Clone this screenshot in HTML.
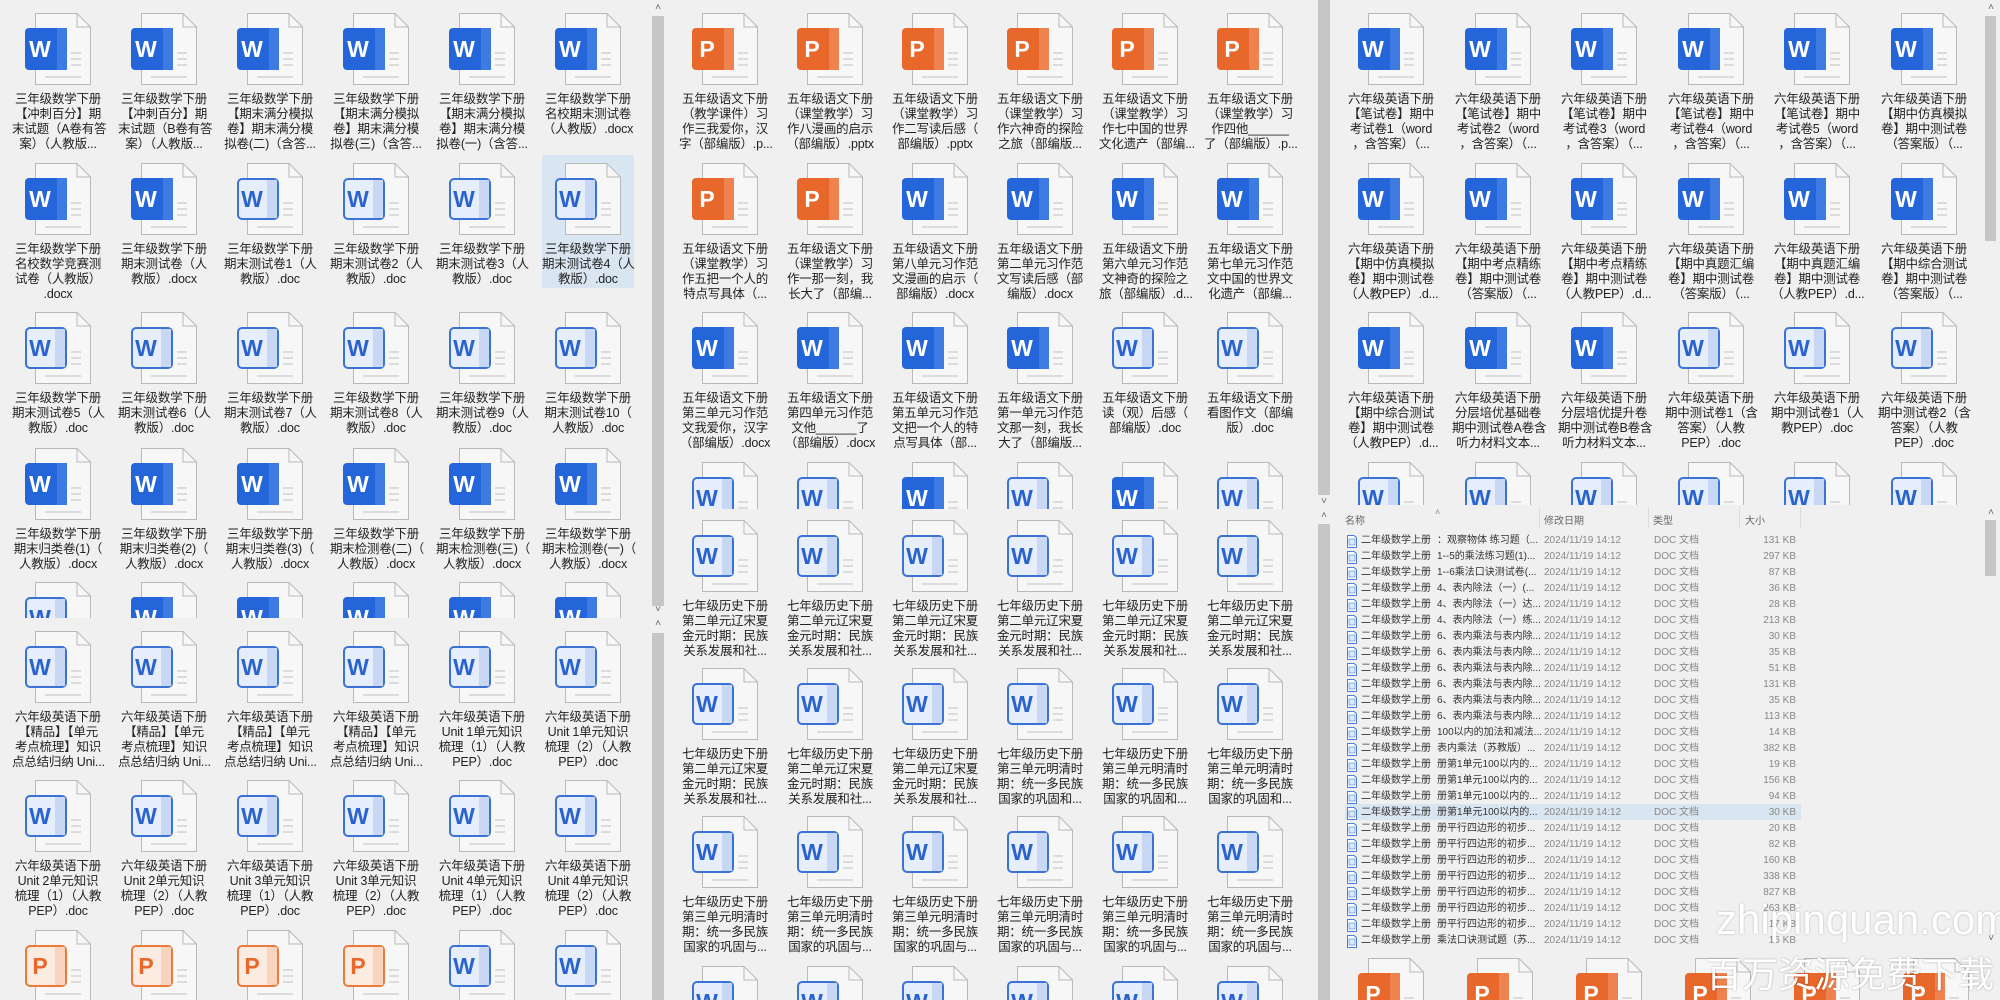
<!DOCTYPE html>
<html><head><meta charset="utf-8">
<style>
*{margin:0;padding:0;box-sizing:border-box}
body{width:2000px;height:1000px;background:#f0f0f0;position:relative;overflow:hidden;font-family:"Liberation Sans","Noto Sans CJK SC",sans-serif;color:#222}
.p{position:absolute;overflow:hidden;background:#f0f0f0}
.c{position:absolute;width:92px}
.c svg{display:block;margin:0 auto;width:66px;height:72px}
.t{margin-top:7px;font-size:12.5px;line-height:15px;text-align:center;white-space:nowrap;letter-spacing:-0.2px}
.sb{position:absolute;background:#c6c6c6}
.ar{position:absolute;font-size:10px;color:#666;width:14px;text-align:center}
.sel{position:absolute;background:#d9e5f1}
.lr{position:absolute;left:0;height:16px;width:470px;font-size:10px;line-height:16px;white-space:nowrap}
.lr span{position:absolute;top:0}
.lr .a{left:28px;color:#333}.lr .b{left:104px;color:#333}.lr .d{left:211px;color:#888}.lr .e{left:321px;color:#888}.lr .f{left:400px;width:63px;text-align:right;color:#888}
.lr svg{position:absolute;left:14px;top:2px;width:10px;height:13px}
</style></head><body>
<svg width="0" height="0" style="position:absolute">
<defs>
<g id="pg"><path d="M10.5 .5H52L65.5 14V71.5H10.5Z" fill="#f7f7f7" stroke="#b9b9b9"/><path d="M52 .5V14H65.5" fill="none" stroke="#b9b9b9"/><path d="M46 40h10M46 46h10M46 52h10M20 64h36" stroke="#dcdcdc" stroke-width="2"/></g>
<symbol id="wd" viewBox="0 0 66 72"><use href="#pg"/><rect x="0" y="15" width="42" height="42" rx="4" fill="#2466d9"/><rect x="32" y="15" width="10" height="42" fill="#3d7be3"/><text x="15" y="44" font-family="Liberation Sans" font-weight="bold" font-size="23" fill="#fff" text-anchor="middle">W</text></symbol>
<symbol id="wo" viewBox="0 0 66 72"><use href="#pg"/><rect x="1" y="16" width="40" height="40" rx="4" fill="#e7eefb" stroke="#3a72d6" stroke-width="2"/><rect x="30" y="17" width="10" height="38" fill="#c8d8f4"/><text x="15" y="44" font-family="Liberation Sans" font-weight="bold" font-size="23" fill="#2a63cd" text-anchor="middle">W</text></symbol>
<symbol id="pd" viewBox="0 0 66 72"><use href="#pg"/><rect x="0" y="15" width="42" height="42" rx="4" fill="#e8672a"/><rect x="32" y="15" width="10" height="42" fill="#ef8350"/><text x="15" y="44" font-family="Liberation Sans" font-weight="bold" font-size="23" fill="#fff" text-anchor="middle">P</text></symbol>
<symbol id="po" viewBox="0 0 66 72"><use href="#pg"/><rect x="1" y="16" width="40" height="40" rx="4" fill="#fcebe0" stroke="#ec7a3c" stroke-width="2"/><rect x="30" y="17" width="10" height="38" fill="#f8d4bf"/><text x="15" y="44" font-family="Liberation Sans" font-weight="bold" font-size="23" fill="#e8672a" text-anchor="middle">P</text></symbol>
<symbol id="li" viewBox="0 0 10 13"><path d="M.5 .5H7L9.5 3V12.5H.5Z" fill="#fff" stroke="#4a7fd8"/><rect x="2" y="4" width="6" height="6" fill="#dbe6f8" stroke="#4a7fd8" stroke-width=".6"/></symbol>
</defs></svg>

<!-- LEFT A -->
<div class="p" style="left:0;top:0;width:652px;height:618px">
<div class="sel" style="left:542px;top:155px;width:92px;height:133px"></div>
<div class="c" style="left:12px;top:13px"><svg><use href="#wd"/></svg><div class="t">三年级数学下册<br>【冲刺百分】期<br>末试题（A卷有答<br>案）（人教版...</div></div>
<div class="c" style="left:118px;top:13px"><svg><use href="#wd"/></svg><div class="t">三年级数学下册<br>【冲刺百分】期<br>末试题（B卷有答<br>案）（人教版...</div></div>
<div class="c" style="left:224px;top:13px"><svg><use href="#wd"/></svg><div class="t">三年级数学下册<br>【期末满分模拟<br>卷】期末满分模<br>拟卷(二)（含答...</div></div>
<div class="c" style="left:330px;top:13px"><svg><use href="#wd"/></svg><div class="t">三年级数学下册<br>【期末满分模拟<br>卷】期末满分模<br>拟卷(三)（含答...</div></div>
<div class="c" style="left:436px;top:13px"><svg><use href="#wd"/></svg><div class="t">三年级数学下册<br>【期末满分模拟<br>卷】期末满分模<br>拟卷(一)（含答...</div></div>
<div class="c" style="left:542px;top:13px"><svg><use href="#wd"/></svg><div class="t">三年级数学下册<br>名校期末测试卷<br>（人教版）.docx</div></div>

<div class="c" style="left:12px;top:163px"><svg><use href="#wd"/></svg><div class="t">三年级数学下册<br>名校数学竞赛测<br>试卷（人教版）<br>.docx</div></div>
<div class="c" style="left:118px;top:163px"><svg><use href="#wd"/></svg><div class="t">三年级数学下册<br>期末测试卷（人<br>教版）.docx</div></div>
<div class="c" style="left:224px;top:163px"><svg><use href="#wo"/></svg><div class="t">三年级数学下册<br>期末测试卷1（人<br>教版）.doc</div></div>
<div class="c" style="left:330px;top:163px"><svg><use href="#wo"/></svg><div class="t">三年级数学下册<br>期末测试卷2（人<br>教版）.doc</div></div>
<div class="c" style="left:436px;top:163px"><svg><use href="#wo"/></svg><div class="t">三年级数学下册<br>期末测试卷3（人<br>教版）.doc</div></div>
<div class="c" style="left:542px;top:163px"><svg><use href="#wo"/></svg><div class="t">三年级数学下册<br>期末测试卷4（人<br>教版）.doc</div></div>

<div class="c" style="left:12px;top:312px"><svg><use href="#wo"/></svg><div class="t">三年级数学下册<br>期末测试卷5（人<br>教版）.doc</div></div>
<div class="c" style="left:118px;top:312px"><svg><use href="#wo"/></svg><div class="t">三年级数学下册<br>期末测试卷6（人<br>教版）.doc</div></div>
<div class="c" style="left:224px;top:312px"><svg><use href="#wo"/></svg><div class="t">三年级数学下册<br>期末测试卷7（人<br>教版）.doc</div></div>
<div class="c" style="left:330px;top:312px"><svg><use href="#wo"/></svg><div class="t">三年级数学下册<br>期末测试卷8（人<br>教版）.doc</div></div>
<div class="c" style="left:436px;top:312px"><svg><use href="#wo"/></svg><div class="t">三年级数学下册<br>期末测试卷9（人<br>教版）.doc</div></div>
<div class="c" style="left:542px;top:312px"><svg><use href="#wo"/></svg><div class="t">三年级数学下册<br>期末测试卷10（<br>人教版）.doc</div></div>

<div class="c" style="left:12px;top:448px"><svg><use href="#wd"/></svg><div class="t">三年级数学下册<br>期末归类卷(1)（<br>人教版）.docx</div></div>
<div class="c" style="left:118px;top:448px"><svg><use href="#wd"/></svg><div class="t">三年级数学下册<br>期末归类卷(2)（<br>人教版）.docx</div></div>
<div class="c" style="left:224px;top:448px"><svg><use href="#wd"/></svg><div class="t">三年级数学下册<br>期末归类卷(3)（<br>人教版）.docx</div></div>
<div class="c" style="left:330px;top:448px"><svg><use href="#wd"/></svg><div class="t">三年级数学下册<br>期末检测卷(二)（<br>人教版）.docx</div></div>
<div class="c" style="left:436px;top:448px"><svg><use href="#wd"/></svg><div class="t">三年级数学下册<br>期末检测卷(三)（<br>人教版）.docx</div></div>
<div class="c" style="left:542px;top:448px"><svg><use href="#wd"/></svg><div class="t">三年级数学下册<br>期末检测卷(一)（<br>人教版）.docx</div></div>

<div class="c" style="left:12px;top:582px"><svg><use href="#wo"/></svg></div>
<div class="c" style="left:118px;top:582px"><svg><use href="#wd"/></svg></div>
<div class="c" style="left:224px;top:582px"><svg><use href="#wd"/></svg></div>
<div class="c" style="left:330px;top:582px"><svg><use href="#wd"/></svg></div>
<div class="c" style="left:436px;top:582px"><svg><use href="#wd"/></svg></div>
<div class="c" style="left:542px;top:582px"><svg><use href="#wd"/></svg></div>
</div>

<!-- LEFT B -->
<div class="p" style="left:0;top:618px;width:652px;height:382px">
<div class="c" style="left:12px;top:13px"><svg><use href="#wo"/></svg><div class="t">六年级英语下册<br>【精品】【单元<br>考点梳理】知识<br>点总结归纳 Uni...</div></div>
<div class="c" style="left:118px;top:13px"><svg><use href="#wo"/></svg><div class="t">六年级英语下册<br>【精品】【单元<br>考点梳理】知识<br>点总结归纳 Uni...</div></div>
<div class="c" style="left:224px;top:13px"><svg><use href="#wo"/></svg><div class="t">六年级英语下册<br>【精品】【单元<br>考点梳理】知识<br>点总结归纳 Uni...</div></div>
<div class="c" style="left:330px;top:13px"><svg><use href="#wo"/></svg><div class="t">六年级英语下册<br>【精品】【单元<br>考点梳理】知识<br>点总结归纳 Uni...</div></div>
<div class="c" style="left:436px;top:13px"><svg><use href="#wo"/></svg><div class="t">六年级英语下册<br>Unit 1单元知识<br>梳理（1）（人教<br>PEP）.doc</div></div>
<div class="c" style="left:542px;top:13px"><svg><use href="#wo"/></svg><div class="t">六年级英语下册<br>Unit 1单元知识<br>梳理（2）（人教<br>PEP）.doc</div></div>

<div class="c" style="left:12px;top:162px"><svg><use href="#wo"/></svg><div class="t">六年级英语下册<br>Unit 2单元知识<br>梳理（1）（人教<br>PEP）.doc</div></div>
<div class="c" style="left:118px;top:162px"><svg><use href="#wo"/></svg><div class="t">六年级英语下册<br>Unit 2单元知识<br>梳理（2）（人教<br>PEP）.doc</div></div>
<div class="c" style="left:224px;top:162px"><svg><use href="#wo"/></svg><div class="t">六年级英语下册<br>Unit 3单元知识<br>梳理（1）（人教<br>PEP）.doc</div></div>
<div class="c" style="left:330px;top:162px"><svg><use href="#wo"/></svg><div class="t">六年级英语下册<br>Unit 3单元知识<br>梳理（2）（人教<br>PEP）.doc</div></div>
<div class="c" style="left:436px;top:162px"><svg><use href="#wo"/></svg><div class="t">六年级英语下册<br>Unit 4单元知识<br>梳理（1）（人教<br>PEP）.doc</div></div>
<div class="c" style="left:542px;top:162px"><svg><use href="#wo"/></svg><div class="t">六年级英语下册<br>Unit 4单元知识<br>梳理（2）（人教<br>PEP）.doc</div></div>

<div class="c" style="left:12px;top:312px"><svg><use href="#po"/></svg></div>
<div class="c" style="left:118px;top:312px"><svg><use href="#po"/></svg></div>
<div class="c" style="left:224px;top:312px"><svg><use href="#po"/></svg></div>
<div class="c" style="left:330px;top:312px"><svg><use href="#po"/></svg></div>
<div class="c" style="left:436px;top:312px"><svg><use href="#wo"/></svg></div>
<div class="c" style="left:542px;top:312px"><svg><use href="#wo"/></svg></div>
</div>

<!-- left scrollbars -->
<div class="sb" style="left:652px;top:16px;width:12px;height:590px"></div>
<div class="ar" style="left:651px;top:2px">˄</div>
<div class="ar" style="left:651px;top:604px">˅</div>
<div class="ar" style="left:651px;top:618px">˄</div>
<div class="sb" style="left:652px;top:633px;width:12px;height:367px"></div>

<!-- MIDDLE A -->
<div class="p" style="left:665px;top:0;width:653px;height:509px">
<div class="c" style="left:14px;top:13px"><svg><use href="#pd"/></svg><div class="t">五年级语文下册<br>（教学课件）习<br>作三我爱你，汉<br>字（部编版）.p...</div></div>
<div class="c" style="left:119px;top:13px"><svg><use href="#pd"/></svg><div class="t">五年级语文下册<br>（课堂教学）习<br>作八漫画的启示<br>（部编版）.pptx</div></div>
<div class="c" style="left:224px;top:13px"><svg><use href="#pd"/></svg><div class="t">五年级语文下册<br>（课堂教学）习<br>作二写读后感（<br>部编版）.pptx</div></div>
<div class="c" style="left:329px;top:13px"><svg><use href="#pd"/></svg><div class="t">五年级语文下册<br>（课堂教学）习<br>作六神奇的探险<br>之旅（部编版...</div></div>
<div class="c" style="left:434px;top:13px"><svg><use href="#pd"/></svg><div class="t">五年级语文下册<br>（课堂教学）习<br>作七中国的世界<br>文化遗产（部编...</div></div>
<div class="c" style="left:539px;top:13px"><svg><use href="#pd"/></svg><div class="t">五年级语文下册<br>（课堂教学）习<br>作四他______<br>了（部编版）.p...</div></div>

<div class="c" style="left:14px;top:163px"><svg><use href="#pd"/></svg><div class="t">五年级语文下册<br>（课堂教学）习<br>作五把一个人的<br>特点写具体（...</div></div>
<div class="c" style="left:119px;top:163px"><svg><use href="#pd"/></svg><div class="t">五年级语文下册<br>（课堂教学）习<br>作一那一刻，我<br>长大了（部编...</div></div>
<div class="c" style="left:224px;top:163px"><svg><use href="#wd"/></svg><div class="t">五年级语文下册<br>第八单元习作范<br>文漫画的启示（<br>部编版）.docx</div></div>
<div class="c" style="left:329px;top:163px"><svg><use href="#wd"/></svg><div class="t">五年级语文下册<br>第二单元习作范<br>文写读后感（部<br>编版）.docx</div></div>
<div class="c" style="left:434px;top:163px"><svg><use href="#wd"/></svg><div class="t">五年级语文下册<br>第六单元习作范<br>文神奇的探险之<br>旅（部编版）.d...</div></div>
<div class="c" style="left:539px;top:163px"><svg><use href="#wd"/></svg><div class="t">五年级语文下册<br>第七单元习作范<br>文中国的世界文<br>化遗产（部编...</div></div>

<div class="c" style="left:14px;top:312px"><svg><use href="#wd"/></svg><div class="t">五年级语文下册<br>第三单元习作范<br>文我爱你，汉字<br>（部编版）.docx</div></div>
<div class="c" style="left:119px;top:312px"><svg><use href="#wd"/></svg><div class="t">五年级语文下册<br>第四单元习作范<br>文他______了<br>（部编版）.docx</div></div>
<div class="c" style="left:224px;top:312px"><svg><use href="#wd"/></svg><div class="t">五年级语文下册<br>第五单元习作范<br>文把一个人的特<br>点写具体（部...</div></div>
<div class="c" style="left:329px;top:312px"><svg><use href="#wd"/></svg><div class="t">五年级语文下册<br>第一单元习作范<br>文那一刻，我长<br>大了（部编版...</div></div>
<div class="c" style="left:434px;top:312px"><svg><use href="#wo"/></svg><div class="t">五年级语文下册<br>读（观）后感（<br>部编版）.doc</div></div>
<div class="c" style="left:539px;top:312px"><svg><use href="#wo"/></svg><div class="t">五年级语文下册<br>看图作文（部编<br>版）.doc</div></div>

<div class="c" style="left:14px;top:462px"><svg><use href="#wo"/></svg></div>
<div class="c" style="left:119px;top:462px"><svg><use href="#wo"/></svg></div>
<div class="c" style="left:224px;top:462px"><svg><use href="#wd"/></svg></div>
<div class="c" style="left:329px;top:462px"><svg><use href="#wo"/></svg></div>
<div class="c" style="left:434px;top:462px"><svg><use href="#wd"/></svg></div>
<div class="c" style="left:539px;top:462px"><svg><use href="#wo"/></svg></div>
</div>

<!-- MIDDLE B -->
<div class="p" style="left:665px;top:509px;width:653px;height:491px">
<div class="c" style="left:14px;top:11px"><svg><use href="#wo"/></svg><div class="t">七年级历史下册<br>第二单元辽宋夏<br>金元时期：民族<br>关系发展和社...</div></div>
<div class="c" style="left:119px;top:11px"><svg><use href="#wo"/></svg><div class="t">七年级历史下册<br>第二单元辽宋夏<br>金元时期：民族<br>关系发展和社...</div></div>
<div class="c" style="left:224px;top:11px"><svg><use href="#wo"/></svg><div class="t">七年级历史下册<br>第二单元辽宋夏<br>金元时期：民族<br>关系发展和社...</div></div>
<div class="c" style="left:329px;top:11px"><svg><use href="#wo"/></svg><div class="t">七年级历史下册<br>第二单元辽宋夏<br>金元时期：民族<br>关系发展和社...</div></div>
<div class="c" style="left:434px;top:11px"><svg><use href="#wo"/></svg><div class="t">七年级历史下册<br>第二单元辽宋夏<br>金元时期：民族<br>关系发展和社...</div></div>
<div class="c" style="left:539px;top:11px"><svg><use href="#wo"/></svg><div class="t">七年级历史下册<br>第二单元辽宋夏<br>金元时期：民族<br>关系发展和社...</div></div>

<div class="c" style="left:14px;top:159px"><svg><use href="#wo"/></svg><div class="t">七年级历史下册<br>第二单元辽宋夏<br>金元时期：民族<br>关系发展和社...</div></div>
<div class="c" style="left:119px;top:159px"><svg><use href="#wo"/></svg><div class="t">七年级历史下册<br>第二单元辽宋夏<br>金元时期：民族<br>关系发展和社...</div></div>
<div class="c" style="left:224px;top:159px"><svg><use href="#wo"/></svg><div class="t">七年级历史下册<br>第二单元辽宋夏<br>金元时期：民族<br>关系发展和社...</div></div>
<div class="c" style="left:329px;top:159px"><svg><use href="#wo"/></svg><div class="t">七年级历史下册<br>第三单元明清时<br>期：统一多民族<br>国家的巩固和...</div></div>
<div class="c" style="left:434px;top:159px"><svg><use href="#wo"/></svg><div class="t">七年级历史下册<br>第三单元明清时<br>期：统一多民族<br>国家的巩固和...</div></div>
<div class="c" style="left:539px;top:159px"><svg><use href="#wo"/></svg><div class="t">七年级历史下册<br>第三单元明清时<br>期：统一多民族<br>国家的巩固和...</div></div>

<div class="c" style="left:14px;top:307px"><svg><use href="#wo"/></svg><div class="t">七年级历史下册<br>第三单元明清时<br>期：统一多民族<br>国家的巩固与...</div></div>
<div class="c" style="left:119px;top:307px"><svg><use href="#wo"/></svg><div class="t">七年级历史下册<br>第三单元明清时<br>期：统一多民族<br>国家的巩固与...</div></div>
<div class="c" style="left:224px;top:307px"><svg><use href="#wo"/></svg><div class="t">七年级历史下册<br>第三单元明清时<br>期：统一多民族<br>国家的巩固与...</div></div>
<div class="c" style="left:329px;top:307px"><svg><use href="#wo"/></svg><div class="t">七年级历史下册<br>第三单元明清时<br>期：统一多民族<br>国家的巩固与...</div></div>
<div class="c" style="left:434px;top:307px"><svg><use href="#wo"/></svg><div class="t">七年级历史下册<br>第三单元明清时<br>期：统一多民族<br>国家的巩固与...</div></div>
<div class="c" style="left:539px;top:307px"><svg><use href="#wo"/></svg><div class="t">七年级历史下册<br>第三单元明清时<br>期：统一多民族<br>国家的巩固与...</div></div>

<div class="c" style="left:14px;top:457px"><svg><use href="#wo"/></svg></div>
<div class="c" style="left:119px;top:457px"><svg><use href="#wo"/></svg></div>
<div class="c" style="left:224px;top:457px"><svg><use href="#wo"/></svg></div>
<div class="c" style="left:329px;top:457px"><svg><use href="#wo"/></svg></div>
<div class="c" style="left:434px;top:457px"><svg><use href="#wo"/></svg></div>
<div class="c" style="left:539px;top:457px"><svg><use href="#wo"/></svg></div>
</div>

<!-- middle scrollbar -->
<div class="sb" style="left:1318px;top:0;width:12px;height:495px"></div>
<div class="ar" style="left:1317px;top:496px">˅</div>
<div class="ar" style="left:1317px;top:510px">˄</div>
<div class="sb" style="left:1318px;top:524px;width:12px;height:476px"></div>

<!-- RIGHT A -->
<div class="p" style="left:1333px;top:0;width:650px;height:505px">
<div class="c" style="left:12px;top:13px"><svg><use href="#wd"/></svg><div class="t">六年级英语下册<br>【笔试卷】期中<br>考试卷1（word<br>，含答案）（...</div></div>
<div class="c" style="left:119px;top:13px"><svg><use href="#wd"/></svg><div class="t">六年级英语下册<br>【笔试卷】期中<br>考试卷2（word<br>，含答案）（...</div></div>
<div class="c" style="left:225px;top:13px"><svg><use href="#wd"/></svg><div class="t">六年级英语下册<br>【笔试卷】期中<br>考试卷3（word<br>，含答案）（...</div></div>
<div class="c" style="left:332px;top:13px"><svg><use href="#wd"/></svg><div class="t">六年级英语下册<br>【笔试卷】期中<br>考试卷4（word<br>，含答案）（...</div></div>
<div class="c" style="left:438px;top:13px"><svg><use href="#wd"/></svg><div class="t">六年级英语下册<br>【笔试卷】期中<br>考试卷5（word<br>，含答案）（...</div></div>
<div class="c" style="left:545px;top:13px"><svg><use href="#wd"/></svg><div class="t">六年级英语下册<br>【期中仿真模拟<br>卷】期中测试卷<br>（答案版）（...</div></div>

<div class="c" style="left:12px;top:163px"><svg><use href="#wd"/></svg><div class="t">六年级英语下册<br>【期中仿真模拟<br>卷】期中测试卷<br>（人教PEP）.d...</div></div>
<div class="c" style="left:119px;top:163px"><svg><use href="#wd"/></svg><div class="t">六年级英语下册<br>【期中考点精练<br>卷】期中测试卷<br>（答案版）（...</div></div>
<div class="c" style="left:225px;top:163px"><svg><use href="#wd"/></svg><div class="t">六年级英语下册<br>【期中考点精练<br>卷】期中测试卷<br>（人教PEP）.d...</div></div>
<div class="c" style="left:332px;top:163px"><svg><use href="#wd"/></svg><div class="t">六年级英语下册<br>【期中真题汇编<br>卷】期中测试卷<br>（答案版）（...</div></div>
<div class="c" style="left:438px;top:163px"><svg><use href="#wd"/></svg><div class="t">六年级英语下册<br>【期中真题汇编<br>卷】期中测试卷<br>（人教PEP）.d...</div></div>
<div class="c" style="left:545px;top:163px"><svg><use href="#wd"/></svg><div class="t">六年级英语下册<br>【期中综合测试<br>卷】期中测试卷<br>（答案版）（...</div></div>

<div class="c" style="left:12px;top:312px"><svg><use href="#wd"/></svg><div class="t">六年级英语下册<br>【期中综合测试<br>卷】期中测试卷<br>（人教PEP）.d...</div></div>
<div class="c" style="left:119px;top:312px"><svg><use href="#wd"/></svg><div class="t">六年级英语下册<br>分层培优基础卷<br>期中测试卷A卷含<br>听力材料文本...</div></div>
<div class="c" style="left:225px;top:312px"><svg><use href="#wd"/></svg><div class="t">六年级英语下册<br>分层培优提升卷<br>期中测试卷B卷含<br>听力材料文本...</div></div>
<div class="c" style="left:332px;top:312px"><svg><use href="#wo"/></svg><div class="t">六年级英语下册<br>期中测试卷1（含<br>答案）（人教<br>PEP）.doc</div></div>
<div class="c" style="left:438px;top:312px"><svg><use href="#wo"/></svg><div class="t">六年级英语下册<br>期中测试卷1（人<br>教PEP）.doc</div></div>
<div class="c" style="left:545px;top:312px"><svg><use href="#wo"/></svg><div class="t">六年级英语下册<br>期中测试卷2（含<br>答案）（人教<br>PEP）.doc</div></div>

<div class="c" style="left:12px;top:462px"><svg><use href="#wo"/></svg></div>
<div class="c" style="left:119px;top:462px"><svg><use href="#wo"/></svg></div>
<div class="c" style="left:225px;top:462px"><svg><use href="#wo"/></svg></div>
<div class="c" style="left:332px;top:462px"><svg><use href="#wo"/></svg></div>
<div class="c" style="left:438px;top:462px"><svg><use href="#wo"/></svg></div>
<div class="c" style="left:545px;top:462px"><svg><use href="#wo"/></svg></div>
</div>
<div class="sb" style="left:1985px;top:16px;width:11px;height:225px"></div>
<div class="ar" style="left:1984px;top:2px">˄</div>

<!-- RIGHT B list -->
<div class="p" style="left:1333px;top:505px;width:650px;height:495px">
<div style="position:absolute;left:12px;top:7px;font-size:10px;color:#666">名称</div>
<div style="position:absolute;left:102px;top:2px;font-size:9px;color:#888">˄</div>
<div style="position:absolute;left:206px;top:2px;width:1px;height:22px;background:#dcdcdc"></div>
<div style="position:absolute;left:211px;top:7px;font-size:10px;color:#666">修改日期</div>
<div style="position:absolute;left:315px;top:2px;width:1px;height:22px;background:#dcdcdc"></div>
<div style="position:absolute;left:320px;top:7px;font-size:10px;color:#666">类型</div>
<div style="position:absolute;left:406px;top:2px;width:1px;height:22px;background:#dcdcdc"></div>
<div style="position:absolute;left:412px;top:7px;font-size:10px;color:#666">大小</div>
<div style="position:absolute;left:467px;top:2px;width:1px;height:22px;background:#dcdcdc"></div>
<div class="sel" style="left:12px;top:299px;width:456px;height:16px"></div>
<div style="position:absolute;left:0;top:28px">
<div class="lr" style="top:0"><svg><use href="#li"/></svg><span class="a">二年级数学上册</span><span class="b">：观察物体 练习题（...</span><span class="d">2024/11/19 14:12</span><span class="e">DOC 文档</span><span class="f">131 KB</span></div>
<div class="lr" style="top:16px"><svg><use href="#li"/></svg><span class="a">二年级数学上册</span><span class="b">1--5的乘法练习题(1)...</span><span class="d">2024/11/19 14:12</span><span class="e">DOC 文档</span><span class="f">297 KB</span></div>
<div class="lr" style="top:32px"><svg><use href="#li"/></svg><span class="a">二年级数学上册</span><span class="b">1--6乘法口诀测试卷(...</span><span class="d">2024/11/19 14:12</span><span class="e">DOC 文档</span><span class="f">87 KB</span></div>
<div class="lr" style="top:48px"><svg><use href="#li"/></svg><span class="a">二年级数学上册</span><span class="b">4、表内除法（一）(...</span><span class="d">2024/11/19 14:12</span><span class="e">DOC 文档</span><span class="f">36 KB</span></div>
<div class="lr" style="top:64px"><svg><use href="#li"/></svg><span class="a">二年级数学上册</span><span class="b">4、表内除法（一）达...</span><span class="d">2024/11/19 14:12</span><span class="e">DOC 文档</span><span class="f">28 KB</span></div>
<div class="lr" style="top:80px"><svg><use href="#li"/></svg><span class="a">二年级数学上册</span><span class="b">4、表内除法（一）练...</span><span class="d">2024/11/19 14:12</span><span class="e">DOC 文档</span><span class="f">213 KB</span></div>
<div class="lr" style="top:96px"><svg><use href="#li"/></svg><span class="a">二年级数学上册</span><span class="b">6、表内乘法与表内除...</span><span class="d">2024/11/19 14:12</span><span class="e">DOC 文档</span><span class="f">30 KB</span></div>
<div class="lr" style="top:112px"><svg><use href="#li"/></svg><span class="a">二年级数学上册</span><span class="b">6、表内乘法与表内除...</span><span class="d">2024/11/19 14:12</span><span class="e">DOC 文档</span><span class="f">35 KB</span></div>
<div class="lr" style="top:128px"><svg><use href="#li"/></svg><span class="a">二年级数学上册</span><span class="b">6、表内乘法与表内除...</span><span class="d">2024/11/19 14:12</span><span class="e">DOC 文档</span><span class="f">51 KB</span></div>
<div class="lr" style="top:144px"><svg><use href="#li"/></svg><span class="a">二年级数学上册</span><span class="b">6、表内乘法与表内除...</span><span class="d">2024/11/19 14:12</span><span class="e">DOC 文档</span><span class="f">131 KB</span></div>
<div class="lr" style="top:160px"><svg><use href="#li"/></svg><span class="a">二年级数学上册</span><span class="b">6、表内乘法与表内除...</span><span class="d">2024/11/19 14:12</span><span class="e">DOC 文档</span><span class="f">35 KB</span></div>
<div class="lr" style="top:176px"><svg><use href="#li"/></svg><span class="a">二年级数学上册</span><span class="b">6、表内乘法与表内除...</span><span class="d">2024/11/19 14:12</span><span class="e">DOC 文档</span><span class="f">113 KB</span></div>
<div class="lr" style="top:192px"><svg><use href="#li"/></svg><span class="a">二年级数学上册</span><span class="b">100以内的加法和减法...</span><span class="d">2024/11/19 14:12</span><span class="e">DOC 文档</span><span class="f">14 KB</span></div>
<div class="lr" style="top:208px"><svg><use href="#li"/></svg><span class="a">二年级数学上册</span><span class="b">表内乘法（苏教版）...</span><span class="d">2024/11/19 14:12</span><span class="e">DOC 文档</span><span class="f">382 KB</span></div>
<div class="lr" style="top:224px"><svg><use href="#li"/></svg><span class="a">二年级数学上册</span><span class="b">册第1单元100以内的...</span><span class="d">2024/11/19 14:12</span><span class="e">DOC 文档</span><span class="f">19 KB</span></div>
<div class="lr" style="top:240px"><svg><use href="#li"/></svg><span class="a">二年级数学上册</span><span class="b">册第1单元100以内的...</span><span class="d">2024/11/19 14:12</span><span class="e">DOC 文档</span><span class="f">156 KB</span></div>
<div class="lr" style="top:256px"><svg><use href="#li"/></svg><span class="a">二年级数学上册</span><span class="b">册第1单元100以内的...</span><span class="d">2024/11/19 14:12</span><span class="e">DOC 文档</span><span class="f">94 KB</span></div>
<div class="lr" style="top:272px"><svg><use href="#li"/></svg><span class="a">二年级数学上册</span><span class="b">册第1单元100以内的...</span><span class="d">2024/11/19 14:12</span><span class="e">DOC 文档</span><span class="f">30 KB</span></div>
<div class="lr" style="top:288px"><svg><use href="#li"/></svg><span class="a">二年级数学上册</span><span class="b">册平行四边形的初步...</span><span class="d">2024/11/19 14:12</span><span class="e">DOC 文档</span><span class="f">20 KB</span></div>
<div class="lr" style="top:304px"><svg><use href="#li"/></svg><span class="a">二年级数学上册</span><span class="b">册平行四边形的初步...</span><span class="d">2024/11/19 14:12</span><span class="e">DOC 文档</span><span class="f">82 KB</span></div>
<div class="lr" style="top:320px"><svg><use href="#li"/></svg><span class="a">二年级数学上册</span><span class="b">册平行四边形的初步...</span><span class="d">2024/11/19 14:12</span><span class="e">DOC 文档</span><span class="f">160 KB</span></div>
<div class="lr" style="top:336px"><svg><use href="#li"/></svg><span class="a">二年级数学上册</span><span class="b">册平行四边形的初步...</span><span class="d">2024/11/19 14:12</span><span class="e">DOC 文档</span><span class="f">338 KB</span></div>
<div class="lr" style="top:352px"><svg><use href="#li"/></svg><span class="a">二年级数学上册</span><span class="b">册平行四边形的初步...</span><span class="d">2024/11/19 14:12</span><span class="e">DOC 文档</span><span class="f">827 KB</span></div>
<div class="lr" style="top:368px"><svg><use href="#li"/></svg><span class="a">二年级数学上册</span><span class="b">册平行四边形的初步...</span><span class="d">2024/11/19 14:12</span><span class="e">DOC 文档</span><span class="f">263 KB</span></div>
<div class="lr" style="top:384px"><svg><use href="#li"/></svg><span class="a">二年级数学上册</span><span class="b">册平行四边形的初步...</span><span class="d">2024/11/19 14:12</span><span class="e">DOC 文档</span><span class="f">17 KB</span></div>
<div class="lr" style="top:400px"><svg><use href="#li"/></svg><span class="a">二年级数学上册</span><span class="b">乘法口诀测试题（苏...</span><span class="d">2024/11/19 14:12</span><span class="e">DOC 文档</span><span class="f">16 KB</span></div>
</div>
<div class="c" style="left:12px;top:453px"><svg><use href="#pd"/></svg></div>
<div class="c" style="left:121px;top:453px"><svg><use href="#pd"/></svg></div>
<div class="c" style="left:230px;top:453px"><svg><use href="#pd"/></svg></div>
<div class="c" style="left:339px;top:453px"><svg><use href="#pd"/></svg></div>
<div class="c" style="left:448px;top:453px"><svg><use href="#pd"/></svg></div>
<div class="c" style="left:557px;top:453px"><svg><use href="#pd"/></svg></div>
</div>
<div class="sb" style="left:1985px;top:520px;width:11px;height:56px"></div>
<div class="ar" style="left:1984px;top:507px">˄</div>
<div class="ar" style="left:1984px;top:933px">˅</div>

<!-- watermark -->
<div style="position:absolute;left:1716px;top:896px;font-size:42px;line-height:48px;color:#fff;font-family:'Liberation Sans',sans-serif;text-shadow:0 0 2px rgba(0,0,0,.25);white-space:nowrap">zhipinquan.com</div>
<div style="position:absolute;left:1706px;top:953px;font-size:36px;line-height:44px;color:#fff;font-family:'Liberation Sans','Noto Sans CJK SC',sans-serif;text-shadow:0 0 2px rgba(0,0,0,.3);white-space:nowrap">百万资源免费下载</div>
</body></html>
